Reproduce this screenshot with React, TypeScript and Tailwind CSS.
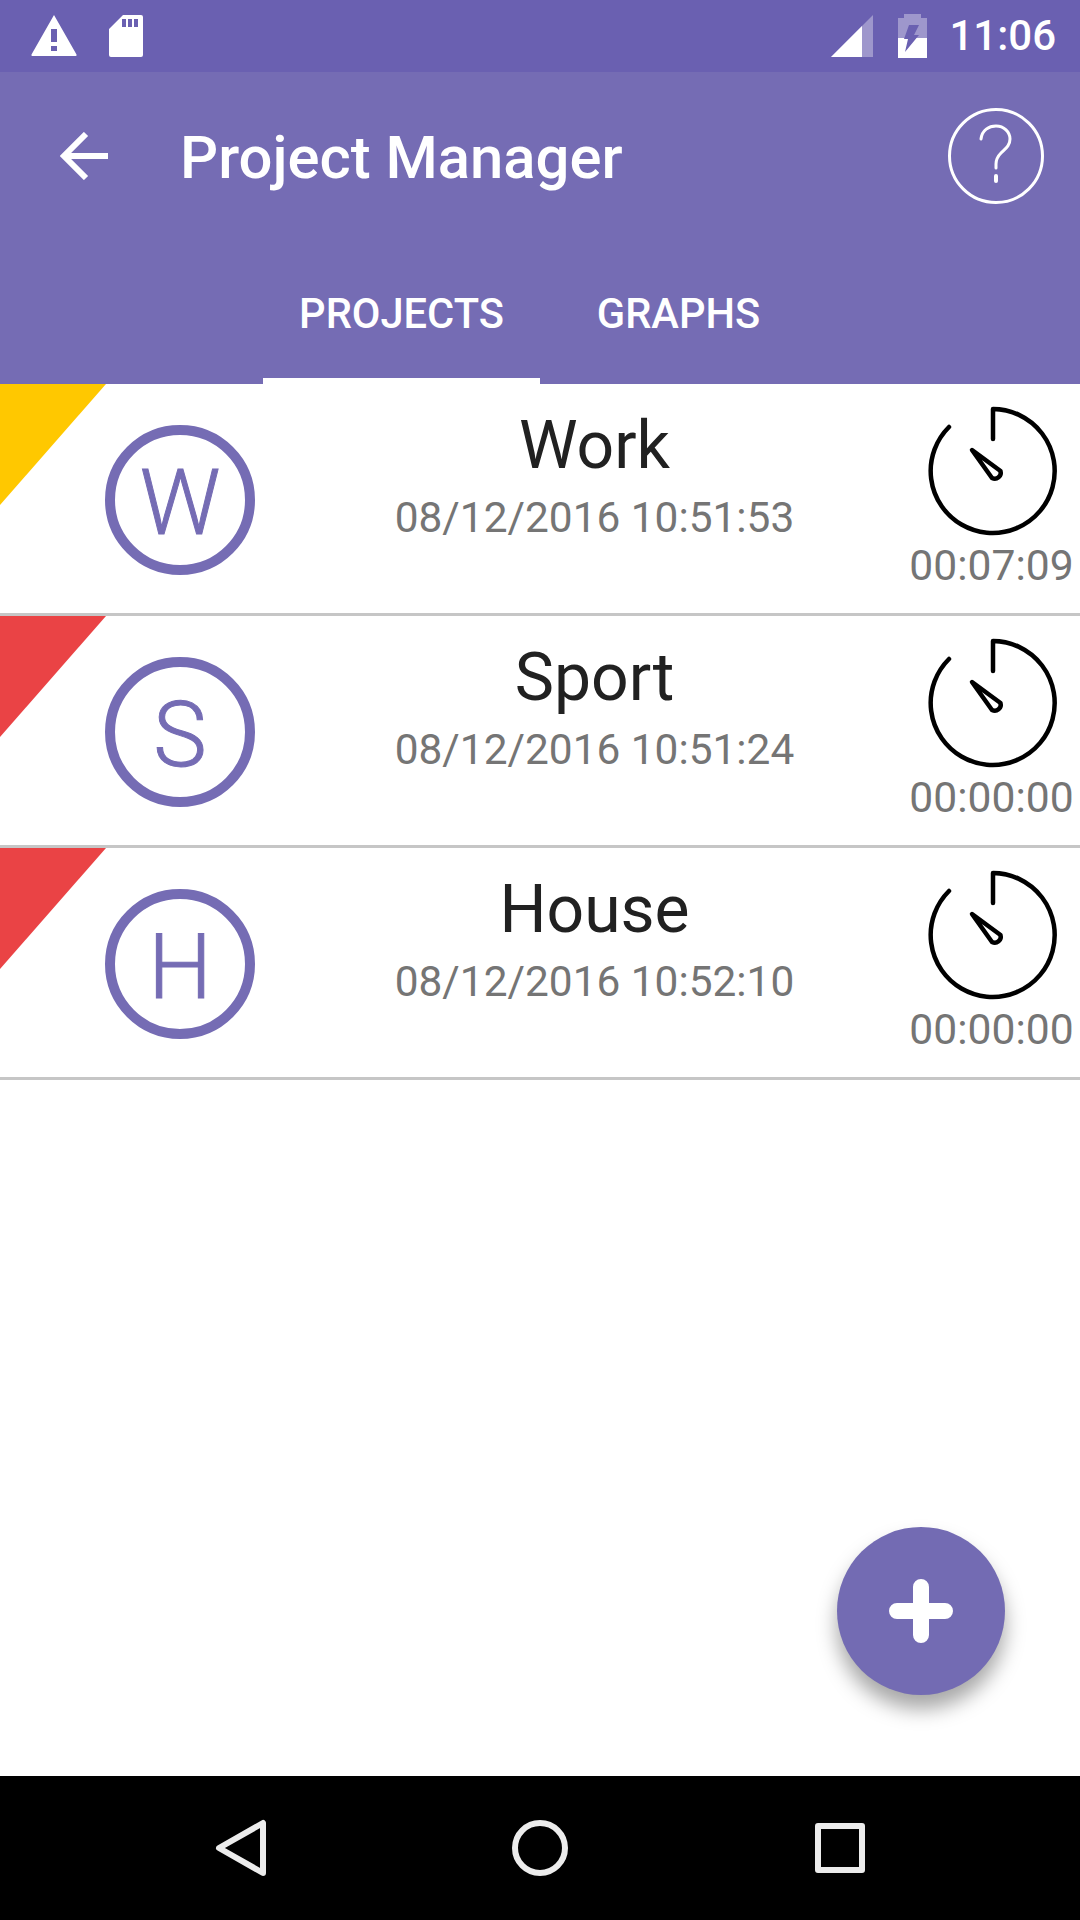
import React from 'react';

type Project = {
  letter: string;
  name: string;
  date: string;
  time: string;
  corner: string;
};

const projects: Project[] = [
  { letter: 'W', name: 'Work', date: '08/12/2016 10:51:53', time: '00:07:09', corner: '#ffc800' },
  { letter: 'S', name: 'Sport', date: '08/12/2016 10:51:24', time: '00:00:00', corner: '#ea4345' },
  { letter: 'H', name: 'House', date: '08/12/2016 10:52:10', time: '00:00:00', corner: '#ea4345' },
];

const StatusBar: React.FC = () => (
  <div className="h-[72px] bg-[#6a60b1] flex items-center shrink-0">
    {/* warning */}
    <svg width="46" height="42" viewBox="0 0 46 42" className="ml-[31px]">
      <path
        fillRule="evenodd"
        fill="#fff"
        d="M23 0 L45.5 39.5 Q46 41 44.5 41 L1.5 41 Q0 41 0.5 39.5 Z M20 14 L20 27 L26 27 L26 14 Z M20 31 L20 36 L26 36 L26 31 Z"
      />
    </svg>
    {/* sd card */}
    <svg width="34" height="42" viewBox="0 0 34 42" className="ml-[32px]">
      <path
        fillRule="evenodd"
        fill="#fff"
        d="M14 0 L32 0 Q34 0 34 2 L34 40 Q34 42 32 42 L2 42 Q0 42 0 40 L0 14 Z M13 4 L13 12 L17 12 L17 4 Z M19 4 L19 12 L23 12 L23 4 Z M25 4 L25 12 L29 12 L29 4 Z"
      />
    </svg>
    <div className="ml-auto flex items-center">
      {/* signal */}
      <svg width="42" height="42" viewBox="0 0 42 42">
        <path d="M42 0 L42 42 L0 42 Z" fill="#fff" fillOpacity="0.35" />
        <path d="M31 11 L31 42 L0 42 Z" fill="#fff" />
      </svg>
      {/* battery charging */}
      <svg width="29" height="44" viewBox="0 0 29 44" className="ml-[25px]">
        <path fill="#fff" fillOpacity="0.35" d="M6 0 L23 0 L23 4 L29 4 L29 24 L0 24 L0 4 L6 4 Z" />
        <path fill="#fff" d="M0 24 H29 V44 H0 Z" />
        <path fill="#6a60b1" d="M11 11 L21 11 L16 21 L21 21 L7 38 L10 25 L6 25 Z" />
      </svg>
      <span className="ml-[22px] mr-[24px] text-[42px] font-medium text-white leading-none">11:06</span>
    </div>
  </div>
);

const AppBar: React.FC = () => (
  <div className="bg-[#756cb4] shrink-0">
    <div className="h-[168px] flex items-center">
      <svg width="48" height="48" viewBox="0 0 48 48" className="ml-[60px]" fill="none" stroke="#fff" strokeWidth="6">
        <path d="M48 24 H3" />
        <path d="M26 2 L4 24 L26 46" />
      </svg>
      <h1 className="ml-[72px] mt-[5px] text-[59.8px] font-medium text-white leading-none">Project Manager</h1>
      <svg width="96" height="96" viewBox="0 0 96 96" className="ml-auto mr-[36px]" fill="none" stroke="#fff">
        <circle cx="48" cy="48" r="46.5" strokeWidth="3" />
        <path
          d="M33 31 C34 22 41 18 48 18 C56 18 62 24 62 31 C62 38 57 41 53 45 C50 48 48 51 48 56 V60"
          strokeWidth="3"
          strokeLinecap="round"
        />
        <path d="M48 68 V73" strokeWidth="4" strokeLinecap="round" />
      </svg>
    </div>
    <div className="h-[144px] flex justify-center">
      <div className="w-[277px] flex items-center justify-center border-b-[6px] border-white">
        <span className="text-[41.6px] font-medium text-white leading-none mt-[9px]">PROJECTS</span>
      </div>
      <div className="w-[277px] flex items-center justify-center">
        <span className="text-[41.6px] font-medium text-white leading-none mt-[3px]">GRAPHS</span>
      </div>
    </div>
  </div>
);

const TimerIcon: React.FC = () => (
  <svg width="136" height="136" viewBox="0 0 136 136" fill="none" stroke="#000" strokeWidth="4.5" strokeLinecap="round" strokeLinejoin="round" className="ml-[1px]">
    <path d="M68 36 V6 A62 62 0 1 1 24 24" />
    <path d="M47 47 L75.5 68 A6 6 0 0 1 67 75 Z" />
  </svg>
);

const ProjectRow: React.FC<{ project: Project }> = ({ project }) => (
  <div className="relative h-[232px] flex items-center border-b-[3px] border-[#c6c6c6] bg-white">
    <svg width="106" height="121" viewBox="0 0 106 121" className="absolute top-0 left-0">
      <path d="M0 0 H106 L0 121 Z" fill={project.corner} />
    </svg>
    <div className="ml-[105px] mt-[2px] w-[150px] h-[150px] rounded-full border-[10px] border-[#756cb4] flex items-center justify-center shrink-0">
      <span className="text-[90px] font-light text-[#756cb4] leading-none mt-[8px] [-webkit-text-stroke:1px_#756cb4]">{project.letter}</span>
    </div>
    <div className="flex-1 pl-[24px] flex flex-col items-center mt-[-46px]">
      <span className="text-[66px] text-[#212121] leading-[76px]">{project.name}</span>
      <span className="text-[42.4px] text-[#757575] leading-[50px] mt-[9px]">{project.date}</span>
    </div>
    <div className="w-[164px] mr-[6px] flex flex-col items-center mt-[-5px]">
      <TimerIcon />
      <span className="text-[42.6px] text-[#757575] leading-[48px] mt-[2px] -ml-[1px]">{project.time}</span>
    </div>
  </div>
);

const NavBar: React.FC = () => (
  <div className="h-[144px] bg-black flex items-center justify-center shrink-0">
    <div className="w-[1080px] flex items-center">
      <svg width="52" height="58" viewBox="0 0 52 58" className="ml-[215px]" fill="none" stroke="#ececec" strokeWidth="6" strokeLinejoin="round">
        <path d="M48 4 V54 L4 29 Z" />
      </svg>
      <svg width="56" height="56" viewBox="0 0 56 56" className="ml-[245px]" fill="none" stroke="#ececec" strokeWidth="6">
        <circle cx="28" cy="28" r="25" />
      </svg>
      <svg width="50" height="50" viewBox="0 0 50 50" className="ml-[247px]" fill="none" stroke="#ececec" strokeWidth="6" strokeLinejoin="round">
        <rect x="3" y="3" width="44" height="44" />
      </svg>
    </div>
  </div>
);

const App: React.FC = () => {
  return (
    <div className="w-[1080px] h-[1920px] bg-white flex flex-col overflow-hidden font-['Roboto',sans-serif]">
      <StatusBar />
      <AppBar />
      <main className="relative flex-1">
        {projects.map((p) => (
          <ProjectRow key={p.name} project={p} />
        ))}
        <button className="absolute right-[75px] bottom-[81px] w-[168px] h-[168px] rounded-full bg-[#736bb3] flex items-center justify-center shadow-[0_14px_20px_rgba(0,0,0,0.35)]">
          <svg width="64" height="64" viewBox="0 0 64 64" fill="none" stroke="#fff" strokeWidth="16" strokeLinecap="round">
            <path d="M32 8 V56 M8 32 H56" />
          </svg>
        </button>
      </main>
      <NavBar />
    </div>
  );
};

export default App;
